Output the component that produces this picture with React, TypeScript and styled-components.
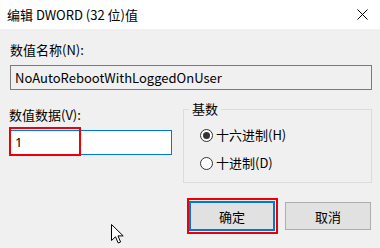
import React from "react";
import styled, { createGlobalStyle } from "styled-components";

const GlobalStyle = createGlobalStyle`
  html, body {
    margin: 0;
    padding: 0;
    background: #f0f0f0;
  }
  body {
    font-family: "Noto Sans CJK SC", sans-serif;
    font-size: 13px;
    color: #000;
  }
`;

const CursorIcon = () => (
  <svg width="13" height="20" viewBox="0 0 13 20">
    <path
      d="M0.5 0.5 L0.5 16.5 L4.5 12.8 L7.2 19 L9.6 18 L7 11.9 L12.2 11.9 Z"
      fill="#fff"
      stroke="#000"
      strokeWidth="1"
      strokeLinejoin="miter"
    />
  </svg>
);

const App: React.FC = () => {
  return (
    <Dialog>
      <GlobalStyle />
      <TitleBar>
        <Title>编辑 DWORD (32 位)值</Title>
        <CloseButton aria-label="close">
          <svg width="11" height="11" viewBox="0 0 11 11">
            <path d="M0.5 0.5 L10.5 10.5 M10.5 0.5 L0.5 10.5" stroke="#000" strokeWidth="1" />
          </svg>
        </CloseButton>
      </TitleBar>
      <Body>
        <FieldLabel>数值名称(N):</FieldLabel>
        <ReadOnlyBox>NoAutoRebootWithLoggedOnUser</ReadOnlyBox>
        <MiddleRow>
          <DataColumn>
            <FieldLabel>数值数据(V):</FieldLabel>
            <InputWrap>
              <ValueInput>1</ValueInput>
              <Highlight $w={72} $h={29} $top={-3} $left={0} />
            </InputWrap>
          </DataColumn>
          <GroupBox>
            <Legend>基数</Legend>
            <RadioRow>
              <Radio $checked />
              <RadioText>十六进制(H)</RadioText>
            </RadioRow>
            <RadioRow>
              <Radio />
              <RadioText>十进制(D)</RadioText>
            </RadioRow>
          </GroupBox>
        </MiddleRow>
        <ButtonRow>
          <ButtonWrap>
            <Button $primary>确定</Button>
            <Highlight $w={91} $h={36} $top={-3} $left={-2} />
          </ButtonWrap>
          <Button>取消</Button>
        </ButtonRow>
        <Cursor>
          <CursorIcon />
        </Cursor>
      </Body>
    </Dialog>
  );
};

const Dialog = styled.div`
  position: relative;
  width: 380px;
  height: 248px;
  background: #f0f0f0;
  overflow: hidden;
`;

const TitleBar = styled.div`
  height: 29px;
  background: #fff;
  display: flex;
  align-items: center;
  justify-content: space-between;
  padding: 0 8px 0 7px;
`;

const Title = styled.div`
  font-size: 13px;
  line-height: 29px;
  color: #000;
`;

const CloseButton = styled.div`
  width: 30px;
  height: 29px;
  display: flex;
  align-items: center;
  justify-content: center;
  margin-right: -5px;
`;

const Body = styled.div`
  position: relative;
  padding: 11px 8px 0 10px;
`;

const FieldLabel = styled.div`
  height: 20px;
  line-height: 20px;
  font-size: 13px;
  margin-bottom: 5px;
`;

const ReadOnlyBox = styled.div`
  box-sizing: border-box;
  height: 25px;
  border: 1px solid #7a7a7a;
  background: #f0f0f0;
  padding: 0 4px;
  line-height: 23px;
  font-size: 13px;
`;

const MiddleRow = styled.div`
  display: grid;
  grid-template-columns: 162px 189px;
  justify-content: space-between;
  margin-top: 15px;
`;

const DataColumn = styled.div`
  margin-left: -1px;
`;

const InputWrap = styled.div`
  position: relative;
  margin-top: 2px;
`;

const ValueInput = styled.div`
  box-sizing: border-box;
  height: 25px;
  border: 1px solid #0078d7;
  background: #fff;
  padding: 0 5px;
  line-height: 23px;
  font-family: "Noto Sans", "Noto Sans CJK SC", sans-serif;
  font-size: 13px;
`;

const Highlight = styled.div<{ $w: number; $h: number; $top: number; $left: number }>`
  position: absolute;
  box-sizing: border-box;
  top: ${(p) => p.$top}px;
  left: ${(p) => p.$left}px;
  width: ${(p) => p.$w}px;
  height: ${(p) => p.$h}px;
  border: 2px solid #f00000;
  pointer-events: none;
`;

const GroupBox = styled.div`
  position: relative;
  box-sizing: border-box;
  height: 74px;
  margin-top: 4px;
  border: 1px solid #dcdcdc;
  padding: 15px 0 0 16px;
  display: flex;
  flex-direction: column;
  gap: 8px;
`;

const Legend = styled.div`
  position: absolute;
  top: -11px;
  left: 5px;
  padding: 0 3px;
  background: #f0f0f0;
  line-height: 20px;
  font-size: 13px;
`;

const RadioRow = styled.div`
  display: flex;
  align-items: center;
  height: 20px;
  gap: 3px;
`;

const Radio = styled.span<{ $checked?: boolean }>`
  box-sizing: border-box;
  width: 13px;
  height: 13px;
  border-radius: 50%;
  border: 1px solid #333;
  background: #fff;
  display: flex;
  align-items: center;
  justify-content: center;

  &::after {
    content: "";
    width: 7px;
    height: 7px;
    border-radius: 50%;
    background: ${(p) => (p.$checked ? "#333" : "transparent")};
  }
`;

const RadioText = styled.span`
  font-size: 13px;
  line-height: 20px;
`;

const ButtonRow = styled.div`
  display: flex;
  justify-content: flex-end;
  align-items: center;
  gap: 10px;
  margin-top: 18px;
  padding-right: 1px;
`;

const ButtonWrap = styled.div`
  position: relative;
`;

const Button = styled.div<{ $primary?: boolean }>`
  box-sizing: border-box;
  width: 86px;
  height: ${(p) => (p.$primary ? 30 : 28)}px;
  background: #e1e1e1;
  border: ${(p) => (p.$primary ? "2px solid #0078d7" : "1px solid #adadad")};
  display: flex;
  align-items: center;
  justify-content: center;
  font-size: 13px;
`;

const Cursor = styled.div`
  position: absolute;
  left: 111px;
  top: 195px;
  line-height: 0;
`;

export default App;
